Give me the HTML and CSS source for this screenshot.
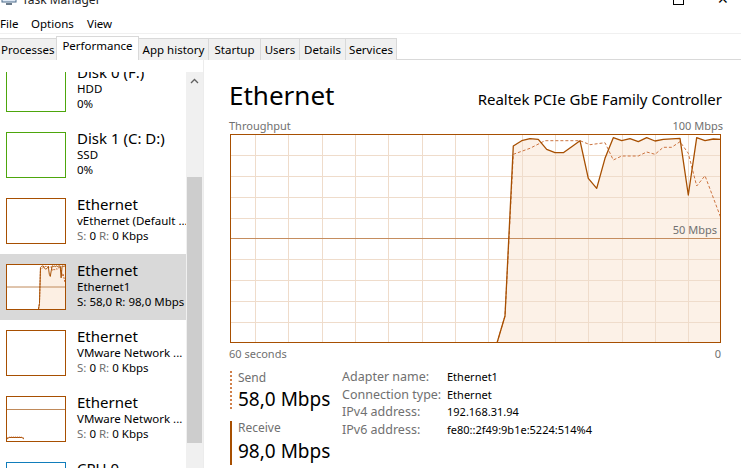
FILE: index.html
```html
<!DOCTYPE html>
<html>
<head>
<meta charset="utf-8">
<link rel="stylesheet" href="styles.css">
</head>
<body>
<div class="window">
  <div class="titlebar">
    <svg class="app-icon" width="16" height="14" viewBox="0 0 16 14"><rect x="1" y="0" width="14" height="9" fill="#dfe9f5" stroke="#4a6a8a"/><path d="M3 6 L6 3 L9 6 L12 2" fill="none" stroke="#2a8a3a" stroke-width="1.2"/><rect x="5" y="10" width="6" height="2" fill="#6a7a8a"/></svg>
    <span class="title">Task Manager</span>
    <span class="controls"><span class="ctl-max"></span><span class="ctl-close">✕</span></span>
  </div>
  <div class="menubar"><span class="m1">File</span><span class="m2">Options</span><span>View</span></div>
  <div class="tabs">
    <span class="tab t1">Processes</span>
    <span class="tab active t2">Performance</span>
    <span class="tab t3">App history</span>
    <span class="tab t4">Startup</span>
    <span class="tab t5">Users</span>
    <span class="tab t6">Details</span>
    <span class="tab t7">Services</span>
  </div>
  <div class="body">
    <div class="sidebar">
      <div class="viewport">
        <div class="list">
          <div class="item">
            <div class="thumb disk"></div>
            <div class="info"><div class="name">Disk 0 (F:)</div><div class="sub">HDD</div><div class="sub">0%</div></div>
          </div>
          <div class="item">
            <div class="thumb disk"></div>
            <div class="info"><div class="name">Disk 1 (C: D:)</div><div class="sub">SSD</div><div class="sub">0%</div></div>
          </div>
          <div class="item">
            <div class="thumb eth"></div>
            <div class="info"><div class="name">Ethernet</div><div class="sub">vEthernet (Default ...</div><div class="sub"><span class="k">S:</span> 0 <span class="k">R:</span> 0 Kbps</div></div>
          </div>
          <div class="item selected">
            <div class="thumb eth">
              <svg class="mini" viewBox="0 0 491 209" preserveAspectRatio="none">
                <polygon points="267,209 275,182 283.3,12 291.7,6.7 300,4.7 308.3,5.3 316.7,15.3 325,18.7 333.3,18.7 341.7,12.7 350,6.7 358.3,44.3 366.7,54.3 375,24.3 383.3,3.7 391.7,6.7 400,4.7 408.3,7.7 416.7,3.7 425,7 433.3,5.3 450,4.3 458.3,61 466.7,3.7 475,6.7 483.3,5 491,5.3 491,209" fill="#fcefe3"/>
                <line x1="0" y1="104.5" x2="491" y2="104.5" stroke="#c08a5a" stroke-width="1" vector-effect="non-scaling-stroke"/>
                <polyline points="267,209 275,182 283.3,20.3 300,14.3 315,6.7 350,6.7 360,10.7 375,8.7 383.3,26 391.7,22 408.3,22 416.7,18 425,20.3 433.3,13.3 441.7,13.3 450,7.7 458.3,19.3 466.7,52 475,41.7 491,84.3" fill="none" stroke="#c8703a" stroke-width="1" stroke-dasharray="2 1" vector-effect="non-scaling-stroke"/>
                <polyline points="267,209 275,182 283.3,12 291.7,6.7 300,4.7 308.3,5.3 316.7,15.3 325,18.7 333.3,18.7 341.7,12.7 350,6.7 358.3,44.3 366.7,54.3 375,24.3 383.3,3.7 391.7,6.7 400,4.7 408.3,7.7 416.7,3.7 425,7 433.3,5.3 450,4.3 458.3,61 466.7,3.7 475,6.7 483.3,5 491,5.3" fill="none" stroke="#a74f01" stroke-width="1" vector-effect="non-scaling-stroke"/>
              </svg>
            </div>
            <div class="info"><div class="name">Ethernet</div><div class="sub">Ethernet1</div><div class="sub">S: 58,0 R: 98,0 Mbps</div></div>
          </div>
          <div class="item">
            <div class="thumb eth"></div>
            <div class="info"><div class="name">Ethernet</div><div class="sub">VMware Network ...</div><div class="sub"><span class="k">S:</span> 0 <span class="k">R:</span> 0 Kbps</div></div>
          </div>
          <div class="item">
            <div class="thumb eth">
              <svg class="mini" viewBox="0 0 58 44" preserveAspectRatio="none">
                <line x1="0" y1="12.5" x2="58" y2="12.5" stroke="#c08a5a" stroke-width="1"/>
                <polyline points="0,42 2,40.5 15,40.5 17,42" fill="none" stroke="#a74f01" stroke-width="1"/>
                <polyline points="0,41 3,40 14,40 17,41" fill="none" stroke="#c8703a" stroke-width="1" stroke-dasharray="1 1"/>
              </svg>
            </div>
            <div class="info"><div class="name">Ethernet</div><div class="sub">VMware Network ...</div><div class="sub"><span class="k">S:</span> 0 <span class="k">R:</span> 0 Kbps</div></div>
          </div>
          <div class="item">
            <div class="thumb cpu"></div>
            <div class="info"><div class="name">CPU 0</div><div class="sub">Intel</div></div>
          </div>
        </div>
        <div class="scrollbar">
          <div class="sb-arrow"><svg width="9" height="6" viewBox="0 0 9 6"><path d="M1 5 L4.5 1.5 L8 5" fill="none" stroke="#606060" stroke-width="1.3"/></svg></div>
          <div class="sb-space top"></div>
          <div class="sb-thumb"></div>
          <div class="sb-space"></div>
        </div>
      </div>
    </div>
    <div class="main">
      <div class="head">
        <div class="big-title">Ethernet</div>
        <div class="device">Realtek PCIe GbE Family Controller</div>
      </div>
      <div class="axis"><span>Throughput</span><span>100 Mbps</span></div>
      <div class="graph">
        <svg width="491" height="209" viewBox="0 0 491 209">
          <polygon points="267,209 275,182 283.3,12 291.7,6.7 300,4.7 308.3,5.3 316.7,15.3 325,18.7 333.3,18.7 341.7,12.7 350,6.7 358.3,44.3 366.7,54.3 375,24.3 383.3,3.7 391.7,6.7 400,4.7 408.3,7.7 416.7,3.7 425,7 433.3,5.3 450,4.3 458.3,61 466.7,3.7 475,6.7 483.3,5 491,5.3 491,209" fill="#fcf1e7"/>
          <g stroke="#efdccb" stroke-width="1">
            <line x1="25.5" y1="0" x2="25.5" y2="209"/>
            <line x1="58.5" y1="0" x2="58.5" y2="209"/>
            <line x1="92.5" y1="0" x2="92.5" y2="209"/>
            <line x1="125.5" y1="0" x2="125.5" y2="209"/>
            <line x1="158.5" y1="0" x2="158.5" y2="209"/>
            <line x1="192.5" y1="0" x2="192.5" y2="209"/>
            <line x1="225.5" y1="0" x2="225.5" y2="209"/>
            <line x1="258.5" y1="0" x2="258.5" y2="209"/>
            <line x1="292.5" y1="0" x2="292.5" y2="209"/>
            <line x1="325.5" y1="0" x2="325.5" y2="209"/>
            <line x1="358.5" y1="0" x2="358.5" y2="209"/>
            <line x1="392.5" y1="0" x2="392.5" y2="209"/>
            <line x1="425.5" y1="0" x2="425.5" y2="209"/>
            <line x1="458.5" y1="0" x2="458.5" y2="209"/>
            <line x1="0" y1="21.5" x2="491" y2="21.5"/>
            <line x1="0" y1="42.5" x2="491" y2="42.5"/>
            <line x1="0" y1="63.5" x2="491" y2="63.5"/>
            <line x1="0" y1="84.5" x2="491" y2="84.5"/>
            <line x1="0" y1="125.5" x2="491" y2="125.5"/>
            <line x1="0" y1="146.5" x2="491" y2="146.5"/>
            <line x1="0" y1="167.5" x2="491" y2="167.5"/>
            <line x1="0" y1="188.5" x2="491" y2="188.5"/>
          </g>
          <line x1="0" y1="104.5" x2="491" y2="104.5" stroke="#c58d5f" stroke-width="1"/>
          <polyline points="267,209 275,182 283.3,20.3 300,14.3 315,6.7 350,6.7 360,10.7 375,8.7 383.3,26 391.7,22 408.3,22 416.7,18 425,20.3 433.3,13.3 441.7,13.3 450,7.7 458.3,19.3 466.7,52 475,41.7 491,84.3" fill="none" stroke="#cc7440" stroke-width="1" stroke-dasharray="3 2"/>
          <polyline points="267,209 275,182 283.3,12 291.7,6.7 300,4.7 308.3,5.3 316.7,15.3 325,18.7 333.3,18.7 341.7,12.7 350,6.7 358.3,44.3 366.7,54.3 375,24.3 383.3,3.7 391.7,6.7 400,4.7 408.3,7.7 416.7,3.7 425,7 433.3,5.3 450,4.3 458.3,61 466.7,3.7 475,6.7 483.3,5 491,5.3" fill="none" stroke="#a74f01" stroke-width="1.3" stroke-linejoin="round"/>
          <rect x="0.5" y="0.5" width="490" height="208" fill="none" stroke="#a74f01" stroke-width="1"/>
        </svg>
        <span class="mid-label">50 Mbps</span>
      </div>
      <div class="axis bottom"><span>60 seconds</span><span>0</span></div>
      <div class="stats">
        <div class="rates">
          <div class="rate send"><div class="rate-label">Send</div><div class="rate-value">58,0 Mbps</div></div>
          <div class="rate recv"><div class="rate-label">Receive</div><div class="rate-value">98,0 Mbps</div></div>
        </div>
        <div class="props">
          <div class="row"><span class="pk">Adapter name:</span><span class="pv">Ethernet1</span></div>
          <div class="row"><span class="pk">Connection type:</span><span class="pv">Ethernet</span></div>
          <div class="row"><span class="pk">IPv4 address:</span><span class="pv">192.168.31.94</span></div>
          <div class="row"><span class="pk">IPv6 address:</span><span class="pv">fe80::2f49:9b1e:5224:514%4</span></div>
        </div>
      </div>
    </div>
  </div>
</div>
</body>
</html>
```

FILE: styles.css
```css
* { box-sizing: border-box; }
html, body { margin: 0; padding: 0; background: #fff; }
body {
  font-family: "Noto Sans", "Open Sans", sans-serif;
  color: #000;
  width: 741px;
  height: 468px;
  overflow: hidden;
}
.window { width: 741px; height: 468px; display: flex; flex-direction: column; overflow: hidden; }

.titlebar {
  height: 8px;
  display: flex;
  align-items: flex-end;
  overflow: hidden;
  flex: none;
}
.app-icon { margin-left: 1px; margin-bottom: 1px; flex: none; }
.title { font-size: 12px; line-height: 14px; margin-left: 5px; margin-bottom: 1px; color: #222; }
.controls { margin-left: auto; display: flex; align-items: flex-end; margin-bottom: 3px; }
.ctl-max { width: 11px; height: 11px; border: 1px solid #000; margin-right: 33px; flex: none; }
.ctl-close { font-size: 14px; line-height: 14px; margin-right: 12px; margin-bottom: -1px; }

.menubar {
  height: 26px;
  padding-top: 6px;
  display: flex;
  align-items: center;
  font-size: 11.5px;
  border-bottom: 1px solid #f0f0f0;
  flex: none;
}
.menubar .m1 { width: 31px; }
.menubar .m2 { width: 56px; }

.tabs {
  height: 26px;
  display: flex;
  align-items: flex-end;
  border-bottom: 1px solid #d9d9d9;
  font-size: 11.5px;
  flex: none;
}
.tab {
  height: 22px;
  line-height: 20px;
  background: #f0f0f0;
  border: 1px solid #d9d9d9;
  border-bottom: none;
  border-left: none;
  margin-bottom: -1px;
  text-align: center;
  padding-top: 1px;
}
.tab.t1 { width: 57px; text-align: left; padding-left: 1px; }
.tab.t3 { width: 70px; }
.tab.t4 { width: 52px; }
.tab.t5 { width: 39px; }
.tab.t6 { width: 46px; }
.tab.t7 { width: 51px; }
.tab.active {
  background: #fff;
  height: 24px;
  border-left: 1px solid #d9d9d9;
  margin-left: -1px;
  width: 83px;
  line-height: 18px;
  padding-top: 0;
}

.body { flex: 1; display: flex; min-height: 0; }
.sidebar {
  width: 204px;
  flex: none;
  padding-top: 12px;
  border-right: 1px solid #ececec;
  display: flex;
  flex-direction: column;
}
.viewport { flex: 1; display: flex; overflow: hidden; min-height: 0; }
.list { width: 186px; flex: none; margin-top: -16px; }
.item {
  height: 66px;
  display: flex;
  padding: 10px 0 0 6px;
}
.item.selected { background: #d9d9d9; }
.thumb {
  width: 60px;
  height: 46px;
  background: #fff;
  border: 1px solid #a74f01;
  flex: none;
}
.thumb.disk { border-color: #4da60c; }
.thumb.cpu { border-color: #117dbb; }
.mini { display: block; width: 58px; height: 44px; }
.info { margin-left: 11px; margin-top: -3px; white-space: nowrap; }
.name { font-size: 15px; line-height: 18px; }
.sub { font-size: 11.5px; line-height: 15px; }
.sub .k { color: #707070; }

.scrollbar {
  width: 17px;
  flex: none;
  background: #f0f0f0;
  display: flex;
  flex-direction: column;
}
.sb-arrow { height: 17px; display: flex; align-items: center; justify-content: center; flex: none; }
.sb-space.top { height: 88px; flex: none; }
.sb-thumb { height: 266px; background: #cdcdcd; margin: 0 1px; flex: none; }
.sb-space { flex: 1; }

.main { flex: 1; padding: 20px 19px 0 25px; display: flex; flex-direction: column; overflow: hidden; }
.main > * { flex: none; }
.head { display: flex; justify-content: space-between; align-items: baseline; height: 37px; }
.big-title { font-size: 26px; line-height: 30px; }
.device { font-size: 15px; line-height: 20px; }
.axis { display: flex; justify-content: space-between; font-size: 11px; color: #707070; line-height: 15px; height: 17px; padding-top: 1px; }
.axis span:last-child { margin-right: -1px; }
.graph { position: relative; width: 491px; height: 209px; margin-left: 1px; }
.graph svg { display: block; }
.mid-label { position: absolute; right: 4px; top: 88px; font-size: 11px; color: #707070; line-height: 15px; }
.axis.bottom { height: auto; padding-top: 3px; }
.axis.bottom span:last-child { margin-right: 1px; }

.stats { display: flex; margin-top: 9px; }
.rates { width: 112px; margin-left: 1px; flex: none; }
.rate { padding-left: 6px; }
.rate.send { border-left: 2px dotted #d0804a; height: 38px; margin-top: 3px; }
.rate.recv { border-left: 2px solid #a74f01; height: 44px; margin-top: 14px; }
.rate-label { font-size: 12px; line-height: 13px; color: #707070; margin-top: -2px; }
.rate-value { font-size: 19px; line-height: 22px; margin-top: 4px; }
.rate.recv .rate-value { margin-top: 6px; }
.props { margin-top: -2px; }
.row { display: flex; align-items: baseline; line-height: 17.5px; }
.pk { width: 105px; color: #707070; font-size: 12.5px; }
.pv { color: #000; font-size: 11px; }
```
